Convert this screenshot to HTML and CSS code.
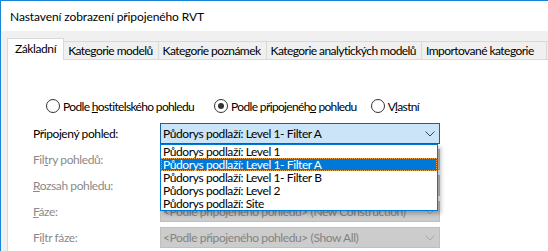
FILE: index.html
```html
<!doctype html>
<html lang="cs">
<head>
  <meta charset="utf-8">
  <title>Nastavení zobrazení připojeného RVT</title>
  <link rel="stylesheet" href="styles.css">
</head>
<body>
  <div class="window">
    <div class="titlebar">Nastavení zobrazení připojeného RVT</div>

    <div class="client">
      <ul class="tabs">
        <li class="tab active">Základní</li>
        <li class="tab">Kategorie modelů</li>
        <li class="tab">Kategorie poznámek</li>
        <li class="tab">Kategorie analytických modelů</li>
        <li class="tab wide">Importované kategorie</li>
        <li class="tab">Revit</li>
      </ul>

      <div class="panel">
        <div class="radios">
          <label class="radio"><span class="dot"></span><span>Podle <u>h</u>ostitelského pohledu</span></label>
          <label class="radio checked"><span class="dot"></span><span>Podle připojenéh<u>o</u> pohledu</span></label>
          <label class="radio last"><span class="dot"></span><span>V<u>l</u>astní</span></label>
        </div>

        <div class="form">
          <div class="row">
            <span class="label">Připo<u>j</u>ený pohled:</span>
            <div class="combo focused">
              <span class="value">Půdorys podlaží: Level 1- Filter A</span>
              <svg class="chev" width="10" height="6" viewBox="0 0 10 6"><path d="M0.5 0.5 L5 5 L9.5 0.5" fill="none" stroke="#444" stroke-width="1"/></svg>
              <ul class="droplist">
                <li>Půdorys podlaží: Level 1</li>
                <li class="sel">Půdorys podlaží: Level 1- Filter A</li>
                <li>Půdorys podlaží: Level 1- Filter B</li>
                <li>Půdorys podlaží: Level 2</li>
                <li>Půdorys podlaží: Site</li>
              </ul>
            </div>
          </div>
          <div class="row">
            <span class="label dis">Fil<u>t</u>ry pohledů:</span>
            <div class="combo disabled"><span class="value"></span></div>
          </div>
          <div class="row">
            <span class="label dis"><u>R</u>ozsah pohledu:</span>
            <div class="combo disabled"><span class="value"></span></div>
          </div>
          <div class="row">
            <span class="label dis"><u>F</u>áze:</span>
            <div class="combo disabled">
              <span class="value">&lt;Podle připojeného pohledu&gt; (New Construction)</span>
              <svg class="chev" width="10" height="6" viewBox="0 0 10 6"><path d="M0.5 0.5 L5 5 L9.5 0.5" fill="none" stroke="#a8a8a8" stroke-width="1"/></svg>
            </div>
          </div>
          <div class="row">
            <span class="label dis">Fi<u>l</u>tr fáze:</span>
            <div class="combo disabled">
              <span class="value">&lt;Podle připojeného pohledu&gt; (Show All)</span>
              <svg class="chev" width="10" height="6" viewBox="0 0 10 6"><path d="M0.5 0.5 L5 5 L9.5 0.5" fill="none" stroke="#a8a8a8" stroke-width="1"/></svg>
            </div>
          </div>
        </div>
      </div>
    </div>
  </div>
</body>
</html>
```

FILE: styles.css
```css
html, body {
  margin: 0;
  padding: 0;
  background: #fff;
}
body {
  font: 12px Lato, "Liberation Sans", Arial, sans-serif;
  letter-spacing: -0.4px;
  color: #000;
  width: 548px;
  height: 251px;
  overflow: hidden;
}
u {
  text-decoration: underline;
  text-underline-offset: 1px;
}

.window {
  border-top: 1px solid #1883d7;
  border-left: 1px solid #1883d7;
  height: 250px;
  display: flex;
  flex-direction: column;
}
.titlebar {
  height: 30px;
  line-height: 31px;
  padding-left: 9px;
  letter-spacing: -0.1px;
  background: #fff;
  white-space: nowrap;
}

.client {
  flex: 1;
  background: #f0f0f0;
  padding: 7px 0 0 6px;
  display: flex;
  flex-direction: column;
  min-width: 0;
}

/* tab strip */
.tabs {
  list-style: none;
  margin: 0;
  padding: 0;
  display: flex;
  align-items: flex-end;
  height: 21px;
  white-space: nowrap;
}
.tab {
  height: 17px;
  line-height: 17px;
  padding: 0 5px 0 4px;
  letter-spacing: -0.55px;
  border: 1px solid #d9d9d9;
  border-bottom: none;
  border-left: none;
  background: #f0f0f0;
  flex-shrink: 0;
}
.tab.wide {
  padding-right: 12px;
}
.tab.active {
  height: 21px;
  line-height: 20px;
  padding: 0 7px;
  letter-spacing: -0.4px;
  background: #fff;
  border-left: 1px solid #d9d9d9;
  position: relative;
  z-index: 1;
  margin-bottom: -1px;
}

.panel {
  flex: 1;
  background: #fff;
  border-top: 1px solid #d9d9d9;
  border-left: 1px solid #d9d9d9;
  padding: 38px 0 0 25px;
}

/* radio buttons */
.radios {
  display: flex;
  gap: 20px;
  padding-left: 13px;
  height: 16px;
  align-items: center;
  letter-spacing: -0.65px;
}
.radio {
  display: flex;
  align-items: center;
  gap: 3px;
  white-space: nowrap;
}
.radio.last {
  margin-left: -6px;
}
.radio .dot {
  width: 12px;
  height: 12px;
  border: 1px solid #333;
  border-radius: 50%;
  background: #fff;
  display: flex;
  align-items: center;
  justify-content: center;
}
.radio.checked .dot::after {
  content: "";
  width: 6px;
  height: 6px;
  border-radius: 50%;
  background: #333;
}

/* form rows */
.form {
  margin-top: 9px;
  display: flex;
  flex-direction: column;
  gap: 5px;
}
.row {
  display: flex;
  align-items: center;
  height: 21px;
}
.label {
  width: 127px;
  white-space: nowrap;
}
.label.dis {
  color: #8a8a8a;
}

.combo {
  position: relative;
  width: 276px;
  height: 19px;
  border: 1px solid #bfbfbf;
  display: flex;
  align-items: center;
  padding-left: 2px;
  box-sizing: content-box;
}
.combo .value {
  flex: 1;
  white-space: nowrap;
  overflow: hidden;
}
.combo .chev {
  margin: 0 4px 0 6px;
}
.combo.focused {
  background: #cce4f7;
  border-color: #1a5fa6;
}
.combo.disabled {
  background: #cccccc;
  border-color: #bfbfbf;
  color: #838383;
}

/* open list of the focused combo */
.droplist {
  list-style: none;
  margin: 0;
  padding: 0;
  position: absolute;
  left: -1px;
  top: 20px;
  width: 276px;
  background: #fff;
  border: 1px solid #0078d7;
  box-shadow: 3px 3px 4px rgba(0, 0, 0, 0.25);
  z-index: 5;
}
.droplist li {
  height: 13px;
  line-height: 13px;
  padding-left: 1px;
  border: 1px dotted transparent;
  border-width: 0 1px;
  white-space: nowrap;
}
.droplist li.sel {
  background: #0078d7;
  color: #fff;
  border: 1px dotted #f0a040;
  height: 11px;
  line-height: 11px;
}
```
